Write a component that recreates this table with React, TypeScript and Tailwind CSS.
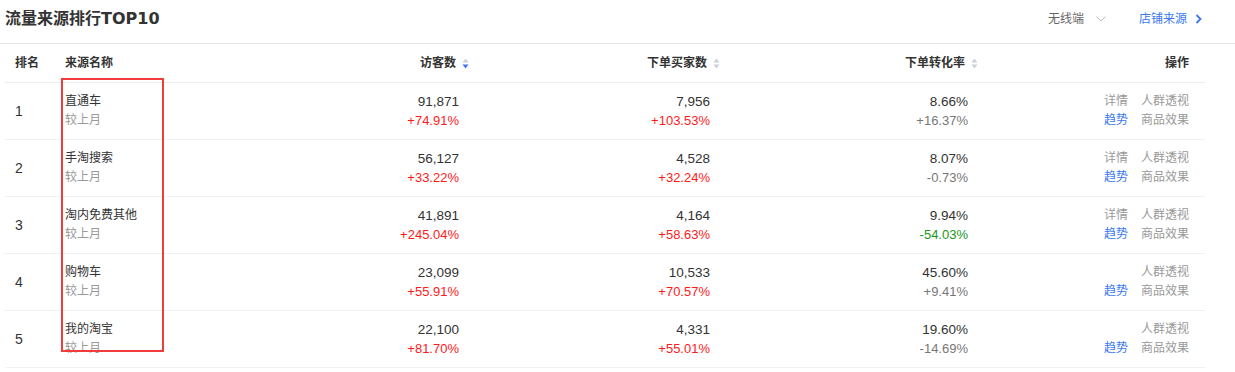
import React from 'react';

type Row = {
  rank: number;
  name: string;
  uv: string;
  uvRate: string;
  buyers: string;
  buyersRate: string;
  conv: string;
  convRate: string;
  convTone: 'gray' | 'green';
  detail: boolean;
};

const rows: Row[] = [
  { rank: 1, name: '直通车', uv: '91,871', uvRate: '+74.91%', buyers: '7,956', buyersRate: '+103.53%', conv: '8.66%', convRate: '+16.37%', convTone: 'gray', detail: true },
  { rank: 2, name: '手淘搜索', uv: '56,127', uvRate: '+33.22%', buyers: '4,528', buyersRate: '+32.24%', conv: '8.07%', convRate: '-0.73%', convTone: 'gray', detail: true },
  { rank: 3, name: '淘内免费其他', uv: '41,891', uvRate: '+245.04%', buyers: '4,164', buyersRate: '+58.63%', conv: '9.94%', convRate: '-54.03%', convTone: 'green', detail: true },
  { rank: 4, name: '购物车', uv: '23,099', uvRate: '+55.91%', buyers: '10,533', buyersRate: '+70.57%', conv: '45.60%', convRate: '+9.41%', convTone: 'gray', detail: false },
  { rank: 5, name: '我的淘宝', uv: '22,100', uvRate: '+81.70%', buyers: '4,331', buyersRate: '+55.01%', conv: '19.60%', convRate: '-14.69%', convTone: 'gray', detail: false },
];

// 排序小图标，active 时下箭头为蓝色
function SortIcon({ active }: { active?: boolean }) {
  return (
    <svg width="7" height="11" viewBox="0 0 7 11" className="ml-[6px] shrink-0">
      <path d="M3.5 0.5 L6.5 4.5 L0.5 4.5 Z" fill="#c9d1dc" />
      <path d="M0.5 6.5 L6.5 6.5 L3.5 10.5 Z" fill={active ? '#3a78f2' : '#c9d1dc'} />
    </svg>
  );
}

const grid = 'grid grid-cols-[50px_155px_259px_251px_258px_1fr]';

export default function App() {
  return (
    <div
      className="relative w-[1235px] h-[372px] bg-white text-[#333] overflow-hidden"
      style={{ fontFamily: '"Liberation Sans", "Noto Sans CJK SC", sans-serif' }}
    >
      <div className="h-[44px] flex items-center justify-between border-b border-[#e6e6e6] pl-[5px] pr-[33px] pb-[5px]">
        <h2 className="text-[16px] font-semibold text-[#333]">
          流量来源排行
          <span style={{ fontFamily: '"DejaVu Sans", sans-serif' }}>TOP10</span>
        </h2>
        <div className="flex items-center text-[12px]">
          <span className="text-[#666]">无线端</span>
          <svg width="10" height="6" viewBox="0 0 10 6" className="ml-[12px]">
            <path d="M0.5 0.5 L5 5 L9.5 0.5" stroke="#bbb" strokeWidth="1" fill="none" />
          </svg>
          <span className="ml-[33px] text-[#3a78f2]">店铺来源</span>
          <svg width="7" height="10" viewBox="0 0 7 10" className="ml-[8px]">
            <path d="M1.5 1 L5.5 5 L1.5 9" stroke="#3a78f2" strokeWidth="1.8" fill="none" />
          </svg>
        </div>
      </div>

      <div className="mx-[5px] w-[1200px]">
        <div className={`${grid} h-[39px] items-center border-b border-[#ececec] text-[12px] font-bold text-[#333]`}>
          <div className="pl-[10px]">排名</div>
          <div className="pl-[10px]">来源名称</div>
          <div className="flex items-center justify-end">访客数<SortIcon active /></div>
          <div className="flex items-center justify-end">下单买家数<SortIcon /></div>
          <div className="flex items-center justify-end">下单转化率<SortIcon /></div>
          <div className="text-right pr-[16px]">操作</div>
        </div>

        {rows.map((r) => (
          <div key={r.rank} className={`${grid} h-[57px] items-center border-b border-[#f0f0f0] leading-[19px]`}>
            <div className="pl-[10px] text-[14px] text-[#333]">{r.rank}</div>
            <div className="pl-[10px] text-[12px]">
              <div className="text-[#333]">{r.name}</div>
              <div className="text-[#999]">较上月</div>
            </div>
            <div className="pr-[10px] text-right text-[13px]">
              <div className="text-[#333] text-[13.5px]">{r.uv}</div>
              <div className="text-[#ff1a1a]">{r.uvRate}</div>
            </div>
            <div className="pr-[10px] text-right text-[13px]">
              <div className="text-[#333] text-[13.5px]">{r.buyers}</div>
              <div className="text-[#ff1a1a]">{r.buyersRate}</div>
            </div>
            <div className="pr-[10px] text-right text-[13px]">
              <div className="text-[#333] text-[13.5px]">{r.conv}</div>
              <div className={r.convTone === 'green' ? 'text-[#1a961a]' : 'text-[#777]'}>{r.convRate}</div>
            </div>
            <div className="pr-[16px] text-[12px] text-[#999]">
              <div className="flex justify-end gap-[13px]">
                {r.detail && <span>详情</span>}
                <span>人群透视</span>
              </div>
              <div className="flex justify-end gap-[13px]">
                <span className="text-[#3a78f2]">趋势</span>
                <span>商品效果</span>
              </div>
            </div>
          </div>
        ))}
      </div>

      {/* 标注框 */}
      <div className="absolute left-[61px] top-[78px] w-[103px] h-[274px] border-2 border-[#f23b3b] pointer-events-none" />
    </div>
  );
}
